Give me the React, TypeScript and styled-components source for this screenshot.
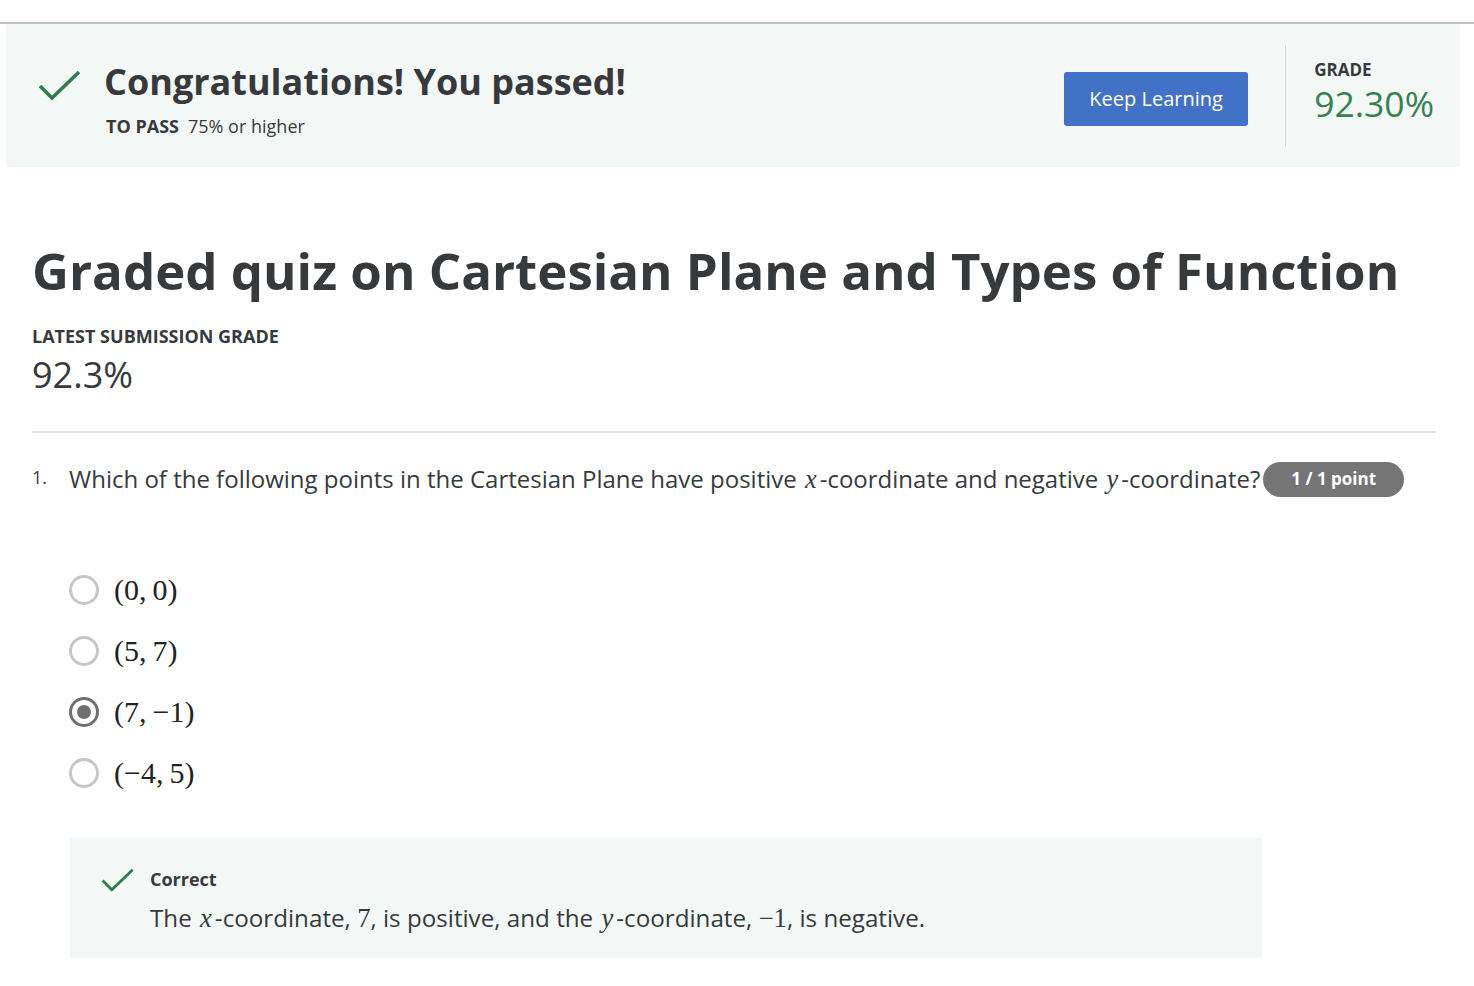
import React from "react";
import styled, { createGlobalStyle } from "styled-components";

const Global = createGlobalStyle`
  html, body { margin: 0; padding: 0; background: #ffffff; }
  body { font-family: "Open Sans", "Noto Sans", sans-serif; color: #373a3c; }
  * { box-sizing: border-box; }
`;

const Page = styled.div`
  width: 1474px;
  padding-top: 22px;
`;

const TopRule = styled.div`
  height: 2px;
  background: #c4c4c4;
`;

const Banner = styled.section`
  margin: 0 14px 0 6px;
  height: 143px;
  background: #f3f8f6;
  display: flex;
  align-items: center;
  padding: 0 26px 0 32px;
`;

const BannerMain = styled.div`
  flex: 1;
  display: flex;
  align-items: flex-start;
  gap: 22px;
  padding-top: 6px;
`;

const CheckIcon = styled.svg<{ $w: number; $top: number }>`
  width: ${(p) => p.$w}px;
  height: ${(p) => Math.round((p.$w * 32) / 44)}px;
  margin-top: ${(p) => p.$top}px;
  align-self: flex-start;
  flex: none;
`;

const BannerTexts = styled.div`
  display: flex;
  flex-direction: column;
  gap: 10px;
`;

const BannerTitle = styled.h1`
  margin: 0;
  font-size: 36px;
  line-height: 44px;
  font-weight: 700;
  color: #373a3c;
`;

const PassLine = styled.div`
  font-size: 18px;
  line-height: 24px;
  padding-left: 2px;
  display: flex;
  gap: 9px;
`;

const Strong = styled.span`
  font-weight: 700;
`;

const PrimaryButton = styled.button`
  width: 184px;
  height: 54px;
  background: #4272c8;
  color: #ffffff;
  border: none;
  border-radius: 3px;
  font-family: "Open Sans", sans-serif;
  font-size: 20px;
  font-weight: 500;
  margin-right: 37px;
  margin-top: 6px;
`;

const VDivider = styled.div`
  width: 1px;
  height: 102px;
  background: #d6d6d6;
  margin-right: 28px;
`;

const GradeBox = styled.div`
  display: flex;
  flex-direction: column;
  gap: 2px;
  padding-bottom: 9px;
`;

const Label = styled.div<{ $size?: number; $upper?: boolean }>`
  font-size: ${(p) => p.$size ?? 16}px;
  font-weight: 700;
  line-height: 22px;
  text-transform: ${(p) => (p.$upper === false ? "none" : "uppercase")};
  color: #373a3c;
`;

const GradeValue = styled.div`
  font-size: 35.5px;
  line-height: 40px;
  color: #378054;
`;

const Content = styled.main`
  padding: 70px 38px 0 32px;
`;

const QuizTitle = styled.h2`
  margin: 0 0 22px;
  font-size: 51px;
  line-height: 66px;
  font-weight: 700;
  color: #373a3c;
  white-space: nowrap;
`;

const SubGrade = styled.div`
  font-size: 36px;
  line-height: 48px;
  margin-top: 4px;
`;

const HRule = styled.hr`
  border: none;
  height: 2px;
  background: #e4e4e4;
  margin: 32px 0 28px;
`;

const QuestionRow = styled.div`
  display: flex;
  align-items: flex-start;
`;

const QNum = styled.span`
  width: 37px;
  font-size: 18px;
  line-height: 32px;
  flex: none;
`;

const QText = styled.div`
  font-size: 24px;
  line-height: 36px;
  white-space: nowrap;
  display: flex;
  align-items: center;
`;

const MathVar = styled.span`
  font-family: "Liberation Serif", "DejaVu Serif", serif;
  font-style: italic;
  font-size: 1.1em;
  padding: 0 3px 0 2px;
`;

const MathNum = styled.span`
  font-family: "Liberation Serif", "DejaVu Serif", serif;
  font-size: 1.1em;
`;

const Badge = styled.span`
  margin-left: 3px;
  height: 35px;
  padding: 0 28px;
  border-radius: 18px;
  background: #757575;
  color: #ffffff;
  font-size: 17px;
  font-weight: 700;
  display: inline-flex;
  align-items: center;
`;

const Options = styled.div`
  display: flex;
  flex-direction: column;
  gap: 19px;
  padding: 72px 0 0 37px;
`;

const Option = styled.label`
  display: flex;
  align-items: center;
  gap: 15px;
  height: 42px;
`;

const Radio = styled.span<{ $checked?: boolean }>`
  width: 30px;
  height: 30px;
  border-radius: 50%;
  border: 3px solid ${(p) => (p.$checked ? "#6f6f6f" : "#c6c6c6")};
  display: flex;
  align-items: center;
  justify-content: center;
  flex: none;
  &::after {
    content: "";
    display: ${(p) => (p.$checked ? "block" : "none")};
    width: 14px;
    height: 14px;
    border-radius: 50%;
    background: #6f6f6f;
  }
`;

const MathOption = styled.span`
  font-family: "Liberation Serif", "DejaVu Serif", serif;
  font-size: 30px;
  color: #222;
`;

const Feedback = styled.div`
  margin: 44px 174px 0 38px;
  background: #f3f8f6;
  padding: 30px 30px 24px 31px;
  display: flex;
  gap: 15px;
`;

const FeedbackTexts = styled.div`
  display: flex;
  flex-direction: column;
  gap: 12px;
`;

const FeedbackText = styled.div`
  font-size: 24.2px;
  line-height: 32px;
`;

const Check: React.FC<{ w: number; top: number }> = ({ w, top }) => (
  <CheckIcon $w={w} $top={top} viewBox="0 0 44 32" fill="none">
    <path d="M2 16 L14 28 L41 2" stroke="#2f7d4f" strokeWidth="3.6" />
  </CheckIcon>
);

const options = [
  { text: "(0,\u20090)", checked: false },
  { text: "(5,\u20097)", checked: false },
  { text: "(7,\u2009\u22121)", checked: true },
  { text: "(\u22124,\u20095)", checked: false },
];

export default function App() {
  return (
    <Page>
      <Global />
      <TopRule />
      <Banner>
        <BannerMain>
          <Check w={44} top={10} />
          <BannerTexts>
            <BannerTitle>Congratulations! You passed!</BannerTitle>
            <PassLine>
              <Strong>TO PASS</Strong>
              <span>75% or higher</span>
            </PassLine>
          </BannerTexts>
        </BannerMain>
        <PrimaryButton>Keep Learning</PrimaryButton>
        <VDivider />
        <GradeBox>
          <Label $size={17}>Grade</Label>
          <GradeValue>92.30%</GradeValue>
        </GradeBox>
      </Banner>
      <Content>
        <QuizTitle>Graded quiz on Cartesian Plane and Types of Function</QuizTitle>
        <Label $size={18}>Latest Submission Grade</Label>
        <SubGrade>92.3%</SubGrade>
        <HRule />
        <QuestionRow>
          <QNum>1.</QNum>
          <QText>
            Which of the following points in the Cartesian Plane have positive&nbsp;
            <MathVar>x</MathVar>-coordinate and negative&nbsp;<MathVar>y</MathVar>-coordinate?
            <Badge>1 / 1 point</Badge>
          </QText>
        </QuestionRow>
        <Options>
          {options.map((o) => (
            <Option key={o.text}>
              <Radio $checked={o.checked} />
              <MathOption>{o.text}</MathOption>
            </Option>
          ))}
        </Options>
        <Feedback>
          <Check w={34} top={0} />
          <FeedbackTexts>
            <Label $size={18} $upper={false}>Correct</Label>
            <FeedbackText>
              The <MathVar>x</MathVar>-coordinate, <MathNum>7</MathNum>, is positive, and the{" "}
              <MathVar>y</MathVar>-coordinate, <MathNum>{"\u22121"}</MathNum>, is negative.
            </FeedbackText>
          </FeedbackTexts>
        </Feedback>
      </Content>
    </Page>
  );
}
